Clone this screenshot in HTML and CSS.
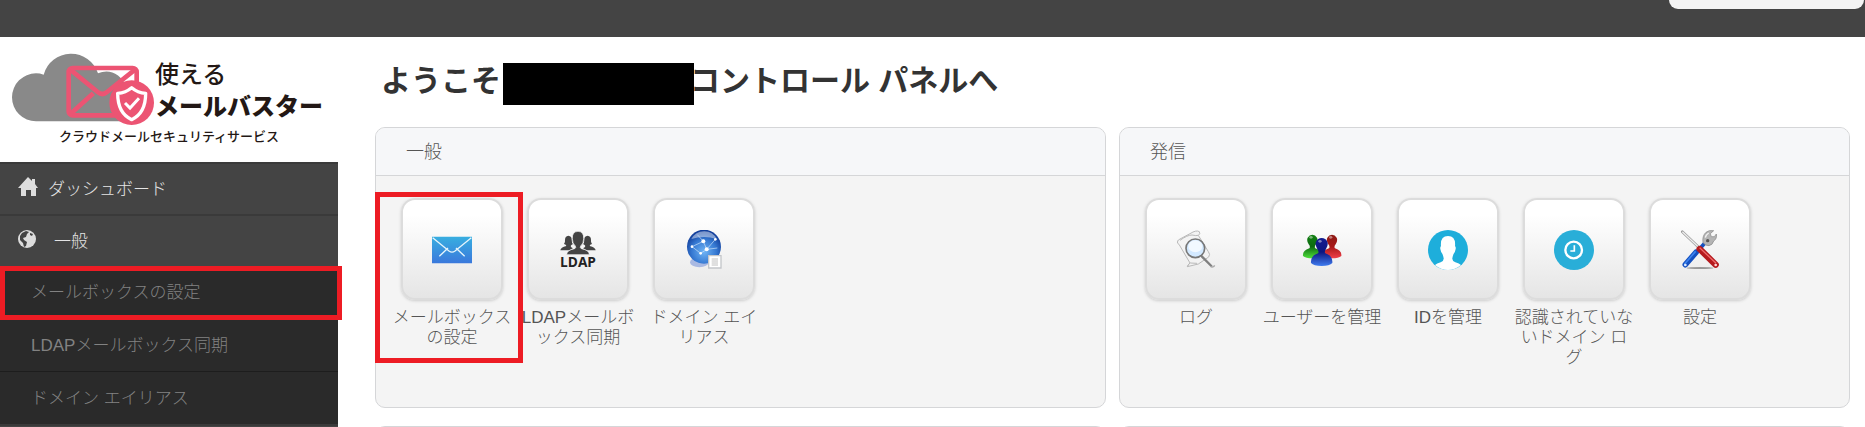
FILE: index.html
```html
<!DOCTYPE html>
<html lang="ja">
<head>
    <meta charset="utf-8">
    <title>コントロール パネル</title>
    <link rel="stylesheet" href="styles.css">
</head>
<body>
    <header class="topbar">
        <div class="topbar-box"></div>
    </header>

    <div class="page">
        <aside class="sidebar">
            <div class="logo">
                <div class="logo-main">
                    <svg class="logo-icon" viewBox="36 68 429 219">
                        <path fill="#898989" d="M108 273a71 71 0 0 1 0-144q12 0 23 4a85 85 0 0 1 163-4a60 60 0 0 1 84 62v82z"/>
                        <g fill="none" stroke="#ec5473" stroke-width="14" stroke-linejoin="round">
                            <rect x="206" y="113" width="204" height="142" rx="12"/>
                            <path d="M211 118l82 67q14 12 28 0l84-67M212 250l68-61M405 250l-68-61"/>
                        </g>
                        <circle cx="395" cy="217" r="67" fill="#ec5473"/>
                        <path fill="#ec5473" stroke="#fff" stroke-width="10" stroke-linejoin="round" d="M395 172q18 15 42 17q0 60-42 79q-42-19-42-79q24-2 42-17z"/>
                        <path fill="none" stroke="#fff" stroke-width="9" d="M375 218l15 15l27-29"/>
                    </svg>
                    <div class="logo-name">
                        <span>使える</span>
                        <strong>メールバスター</strong>
                    </div>
                </div>
                <div class="logo-tagline">クラウドメールセキュリティサービス</div>
            </div>

            <nav>
                <ul class="menu">
                    <li>
                        <a href="#">
                            <svg class="menu-icon" viewBox="0 0 20 20"><path fill="#ddd" d="M10 0l4 4V2h3v5l3 4h-2v8h-5v-6H8v6H3v-8H0z"/></svg>
                            ダッシュボード
                        </a>
                    </li>
                    <li>
                        <a href="#" class="menu-general">
                            <svg class="menu-icon" viewBox="0 0 20 20">
                                <circle cx="9" cy="10" r="9" fill="#ddd"/>
                                <path fill="#444" d="M4 4l4-2l3 1l-2 2l-1 3l-3 1l1 2l3 2l-1 4l-2 1l-1-4l-3-3l0-4zM12 4l3 1l-1 2l-2-1z"/>
                            </svg>
                            一般
                        </a>
                        <ul class="submenu">
                            <li class="marked"><a href="#">メールボックスの設定</a></li>
                            <li><a href="#">LDAPメールボックス同期</a></li>
                            <li><a href="#">ドメイン エイリアス</a></li>
                        </ul>
                    </li>
                    <li class="menu-next"></li>
                </ul>
            </nav>
        </aside>

        <main class="content">
            <h1>ようこそ<span class="masked"></span>コントロール パネルへ</h1>

            <div class="panels">
                <section class="panel">
                    <h2>一般</h2>
                    <div class="tiles">
                        <a href="#" class="tile marked-tile">
                            <span class="tile-icon">
                                <svg viewBox="0 0 120 120">
                                    <defs>
                                        <linearGradient id="mail" x2="0" y2="1"><stop stop-color="#38aee0"/><stop offset="1" stop-color="#3a78dc"/></linearGradient>
                                    </defs>
                                    <path fill="url(#mail)" d="M0 20h120v80H0z"/>
                                    <path fill="none" stroke="#e4f4fc" stroke-width="4" d="M2 23l49 40q9 7 18 0l49-40M22 79l26-25M98 79L72 54"/>
                                </svg>
                            </span>
                            <span class="tile-label">メールボックスの設定</span>
                        </a>
                        <a href="#" class="tile">
                            <span class="tile-icon">
                                <svg viewBox="0 0 120 120">
                                    <g fill="#444">
                                        <path d="M7 61q1-9 18-13q0-4-7-6q4-4 3-12q0-12 10-13q11 1 10 12q0 10 4 13q-6 3-7 6q0 4 7 7l-10 6z"/>
                                        <path d="M113 61q-1-9-18-13q0-4 7-6q-4-4-3-12q0-12-10-13q-11 1-10 12q0 10-4 13q6 3 7 6q0 4-7 7l10 6z"/>
                                        <path stroke="#f8f8f8" stroke-width="2" d="M26 74q0-14 24-18q5-2 2-8q-9-8-9-22q-1-21 17-22q18 1 17 22q0 14-9 22q-3 6 2 8q24 4 24 18z"/>
                                    </g>
                                    <text class="ldap-text" x="60" y="112" text-anchor="middle">LDAP</text>
                                </svg>
                            </span>
                            <span class="tile-label">LDAPメールボックス同期</span>
                        </a>
                        <a href="#" class="tile">
                            <span class="tile-icon">
                                <svg viewBox="0 0 120 120">
                                    <defs>
                                        <radialGradient id="globe" cx=".5" cy=".65" r=".6"><stop stop-color="#6fb4f5"/><stop offset=".6" stop-color="#3679d2"/><stop offset="1" stop-color="#123f9c"/></radialGradient>
                                    </defs>
                                    <ellipse cx="46" cy="97" rx="28" ry="15" fill="#a9b9e2"/>
                                    <circle cx="60" cy="50" r="51" fill="url(#globe)"/>
                                    <path fill="#fff" opacity=".45" d="M22 27Q34 5 60 4t38 23q-38-12-76 0z"/>
                                    <path fill="none" stroke="#cfe4fa" stroke-width="2" d="M24 50l34-16l10 24l26-30M58 34L40 14M68 58L50 70l-26-20M68 58l32-4"/>
                                    <g fill="#fff"><circle cx="58" cy="34" r="6"/><circle cx="68" cy="58" r="6"/><circle cx="24" cy="50" r="4"/><circle cx="94" cy="28" r="4"/><circle cx="50" cy="70" r="4"/></g>
                                    <path fill="#fff" stroke="#c4c6ca" stroke-width="4" d="M74 77h37v37H74z"/>
                                    <path stroke="#c0c0c0" stroke-width="3" d="M83 87h19M83 93h19M83 99h19M83 105h19"/>
                                </svg>
                            </span>
                            <span class="tile-label">ドメイン エイリアス</span>
                        </a>
                    </div>
                </section>

                <section class="panel">
                    <h2>発信</h2>
                    <div class="tiles">
                        <a href="#" class="tile">
                            <span class="tile-icon">
                                <svg viewBox="0 0 120 120">
                                    <path fill="#f3f3f3" stroke="#b9b9b9" stroke-width="3" d="M5 33q-3 8 4 10l33 56q-4 2-8 11l33-8l31-21q6-8-1-16L67 16q7-4 3-11q-9-6-28 6L12 27q-6 3-7 6z"/>
                                    <path fill="none" stroke="#b9b9b9" stroke-width="3" d="M12 31q22-16 36-16q13 3 19 1M34 110q3-8 9-11l20 1"/>
                                    <path stroke="#808080" stroke-width="7" stroke-linecap="round" d="M78 80l28 28"/>
                                    <path fill="none" stroke="#aaa" stroke-width="4" d="M103 109q9 5 13-3"/>
                                    <circle cx="58" cy="55" r="28" fill="#d3e9ff" stroke="#777" stroke-width="5"/>
                                    <ellipse cx="58" cy="49" rx="21" ry="18" fill="#fff" opacity=".7"/>
                                </svg>
                            </span>
                            <span class="tile-label">ログ</span>
                        </a>
                        <a href="#" class="tile">
                            <span class="tile-icon">
                                <svg viewBox="0 0 120 120">
                                    <defs>
                                        <linearGradient id="green" x2="0" y2="1"><stop stop-color="#128012"/><stop offset=".5" stop-color="#0c6a10"/><stop offset="1" stop-color="#4fe03a"/></linearGradient>
                                        <linearGradient id="red" x2="0" y2="1"><stop stop-color="#8c1a14"/><stop offset=".5" stop-color="#a81818"/><stop offset="1" stop-color="#f0404a"/></linearGradient>
                                        <linearGradient id="blue" x2="0" y2="1"><stop stop-color="#141c90"/><stop offset=".5" stop-color="#0c1680"/><stop offset="1" stop-color="#3f7cf0"/></linearGradient>
                                    </defs>
                                    <path fill="url(#green)" d="M3 78q-2-16 19-23q4-5-2-12q-7-11-3-20q5-9 14-9t14 9q4 9-3 20q-6 7-2 12q21 7 19 23q-8 7-28 7T3 78z"/>
                                    <path fill="url(#red)" d="M62 78q-2-16 19-23q4-5-2-12q-7-11-3-20q5-9 14-9t14 9q4 9-3 20q-6 7-2 12q21 7 19 23q-8 7-28 7t-28-7z"/>
                                    <path fill="url(#blue)" d="M27 99q-2-22 21-29q4-4-2-13q-8-13-4-22q5-11 17-11t17 11q4 9-4 22q-6 9-2 13q23 7 21 29q-8 9-32 9t-32-9z"/>
                                    <g fill="#fff" opacity=".45"><ellipse cx="27" cy="22" rx="5" ry="4"/><ellipse cx="86" cy="22" rx="5" ry="4"/><ellipse cx="54" cy="34" rx="5" ry="4"/></g>
                                </svg>
                            </span>
                            <span class="tile-label">ユーザーを管理</span>
                        </a>
                        <a href="#" class="tile">
                            <span class="tile-icon">
                                <svg viewBox="0 0 120 120">
                                    <circle cx="60" cy="60" r="60" fill="#1eaedb"/>
                                    <path fill="#fff" d="M21 105q5-5 17-8q10-4 9-12q-1-8-5-15q-3-3-5-13q-1-7 2-8q-3-31 21-31t21 31q3 1 2 8q-2 10-5 13q-4 7-5 15q-1 8 9 12q12 3 17 8q-17 15-39 15t-39-15z"/>
                                </svg>
                            </span>
                            <span class="tile-label">IDを管理</span>
                        </a>
                        <a href="#" class="tile">
                            <span class="tile-icon">
                                <svg viewBox="0 0 120 120">
                                    <circle cx="60" cy="60" r="60" fill="#29aed8"/>
                                    <g fill="none" stroke="#fff"><circle cx="59" cy="60" r="25" stroke-width="7"/><path stroke-width="5" d="M61 46v17H49"/></g>
                                </svg>
                            </span>
                            <span class="tile-label">認識されていないドメイン ログ</span>
                        </a>
                        <a href="#" class="tile">
                            <span class="tile-icon">
                                <svg viewBox="0 0 120 120">
                                    <ellipse cx="60" cy="114" rx="40" ry="3" fill="#999"/>
                                    <path stroke="#1550c0" stroke-width="17" stroke-linecap="round" d="M16 104l32-37"/>
                                    <path stroke="#3c83ee" stroke-width="5" stroke-linecap="round" d="M14 102l32-37"/>
                                    <path stroke="#1550c0" stroke-width="11" d="M50 67l24-27"/>
                                    <circle cx="16" cy="105" r="4" fill="#dce9ff"/>
                                    <path fill="#b5b5b5" stroke="#858585" stroke-width="2" d="M69 38q-3-20 9-31q9-8 23-5l-10 9l3 9l9 0l6-8q3 14-8 21q-3 12-14 14q-10 1-18-9z"/>
                                    <circle cx="83" cy="32" r="5" fill="#555"/>
                                    <path fill="none" stroke="#f2f2f2" stroke-width="4" d="M76 23q2-9 10-14"/>
                                    <path stroke="#999" stroke-width="8" stroke-linecap="round" d="M7 5l49 47"/>
                                    <path stroke="#eee" stroke-width="4" d="M7 5l49 47"/>
                                    <path stroke="#b51a1e" stroke-width="19" stroke-linecap="round" d="M59 57l48 47"/>
                                    <path stroke="#ef6b6b" stroke-width="4" d="M59 53l49 47"/>
                                    <circle cx="107" cy="105" r="4" fill="#ffd6d6"/>
                                </svg>
                            </span>
                            <span class="tile-label">設定</span>
                        </a>
                    </div>
                </section>

                <section class="panel"></section>
                <section class="panel"></section>
            </div>
        </main>
    </div>
</body>
</html>
```
FILE: styles.css
```css
*,
*::after {
    box-sizing: border-box;
}
body {
    margin: 0;
    height: 100vh;
    overflow: hidden;
    display: flex;
    flex-direction: column;
    font-family: "Liberation Sans", "Noto Sans CJK JP", sans-serif;
    font-size: 17px;
    font-weight: 300;
    color: #555;
    background-color: #fff;
}
a {
    color: inherit;
    text-decoration: none;
}
ul {
    list-style: none;
    margin: 0;
    padding: 0;
}
.topbar {
    flex: none;
    display: flex;
    justify-content: flex-end;
    height: 37px;
    padding-right: 1px;
    background-color: #444;
}
.topbar-box {
    width: 195px;
    height: 9px;
    background-color: #f4f4f4;
    border-radius: 0 0 12px 12px;
}
.page {
    flex: 1;
    display: flex;
    min-height: 0;
}

/* Menú lateral */
.sidebar {
    flex: none;
    width: 338px;
}
.logo {
    height: 125px;
    padding: 16px 12px 0;
    color: #231815;
}
.logo-main {
    display: flex;
}
.logo-icon {
    flex: none;
    width: 143px;
    height: 73px;
}
.logo-name {
    display: flex;
    flex-direction: column;
    padding-top: 6px;
    font-size: 24px;
    line-height: 32px;
    white-space: nowrap;
}
.logo-name span {
    font-weight: 500;
}
.logo-name strong {
    font-weight: 900;
}
.logo-tagline {
    font-size: 13px;
    font-weight: 500;
    line-height: 22px;
    text-align: center;
}
.menu > li {
    background-color: #444;
    border-top: 2px solid #3a3a3a;
}
.menu > li > a {
    display: flex;
    align-items: center;
    gap: 10px;
    height: 50px;
    padding: 0 0 4px 18px;
    color: #e4e4e4;
}
.menu > li > .menu-general {
    gap: 16px;
}
.menu-icon {
    width: 20px;
    height: 20px;
}
.submenu {
    background-color: #2a2a2a;
    color: #828282;
}
.submenu a {
    display: flex;
    align-items: center;
    height: 52px;
    padding: 0 0 4px 31px;
}
.submenu li + li {
    border-top: 1px solid #1d1d1d;
}
.submenu .marked {
    position: relative;
}
.marked::after {
    content: "";
    position: absolute;
    top: 0;
    left: 0;
    right: -4px;
    bottom: -2px;
    border: 5px solid #ed1c24;
}
.menu-next {
    height: 52px;
}

/* Contenido */
.content {
    flex: 1;
    padding: 26px 15px 0 37px;
}
h1 {
    display: flex;
    align-items: flex-start;
    height: 42px;
    margin: 0 0 22px;
    padding-left: 6px;
    font-size: 30px;
    font-weight: bold;
    line-height: 36px;
    color: #333;
    white-space: pre;
}
.masked {
    position: relative;
    width: 191px;
    height: 42px;
    margin: 0 -4px 0 2px;
    background-color: #000;
}
.panels {
    display: grid;
    grid-template-columns: 1fr 1fr;
    gap: 18px 13px;
}
.panel {
    min-height: 281px;
    background-color: #f4f4f4;
    border: 1px solid #d5d6d8;
    border-radius: 10px;
}
.panel h2 {
    height: 48px;
    margin: 0;
    padding-left: 30px;
    font-size: 18px;
    font-weight: 300;
    line-height: 48px;
    background-color: #f6f7f9;
    border-bottom: 1px solid #d5d6d8;
    border-radius: 9px 9px 0 0;
}
.tiles {
    display: flex;
    flex-wrap: wrap;
    gap: 6px;
    padding: 22px 16px;
}
.tile {
    display: flex;
    flex-direction: column;
    align-items: center;
    gap: 8px;
    width: 120px;
}
.tile-icon {
    display: flex;
    align-items: center;
    justify-content: center;
    width: 102px;
    height: 102px;
    padding-top: 2px;
    background: linear-gradient(#fff 15%, #e5e5e5);
    border: 2px solid #dcdcdc;
    border-radius: 14px;
    box-shadow: 0 1px 3px #ccc;
}
.tile-icon svg {
    width: 40px;
    height: 40px;
}
.tile-label {
    line-height: 20px;
    text-align: center;
}
.ldap-text {
    font-family: "Open Sans", sans-serif;
    font-size: 41px;
    font-weight: bold;
    fill: #222;
}
.marked-tile {
    position: relative;
}
.marked-tile::after {
    content: "";
    position: absolute;
    z-index: 1;
    top: -6px;
    left: -17px;
    width: 148px;
    height: 171px;
    border: 5px solid #ed1c24;
}
```
